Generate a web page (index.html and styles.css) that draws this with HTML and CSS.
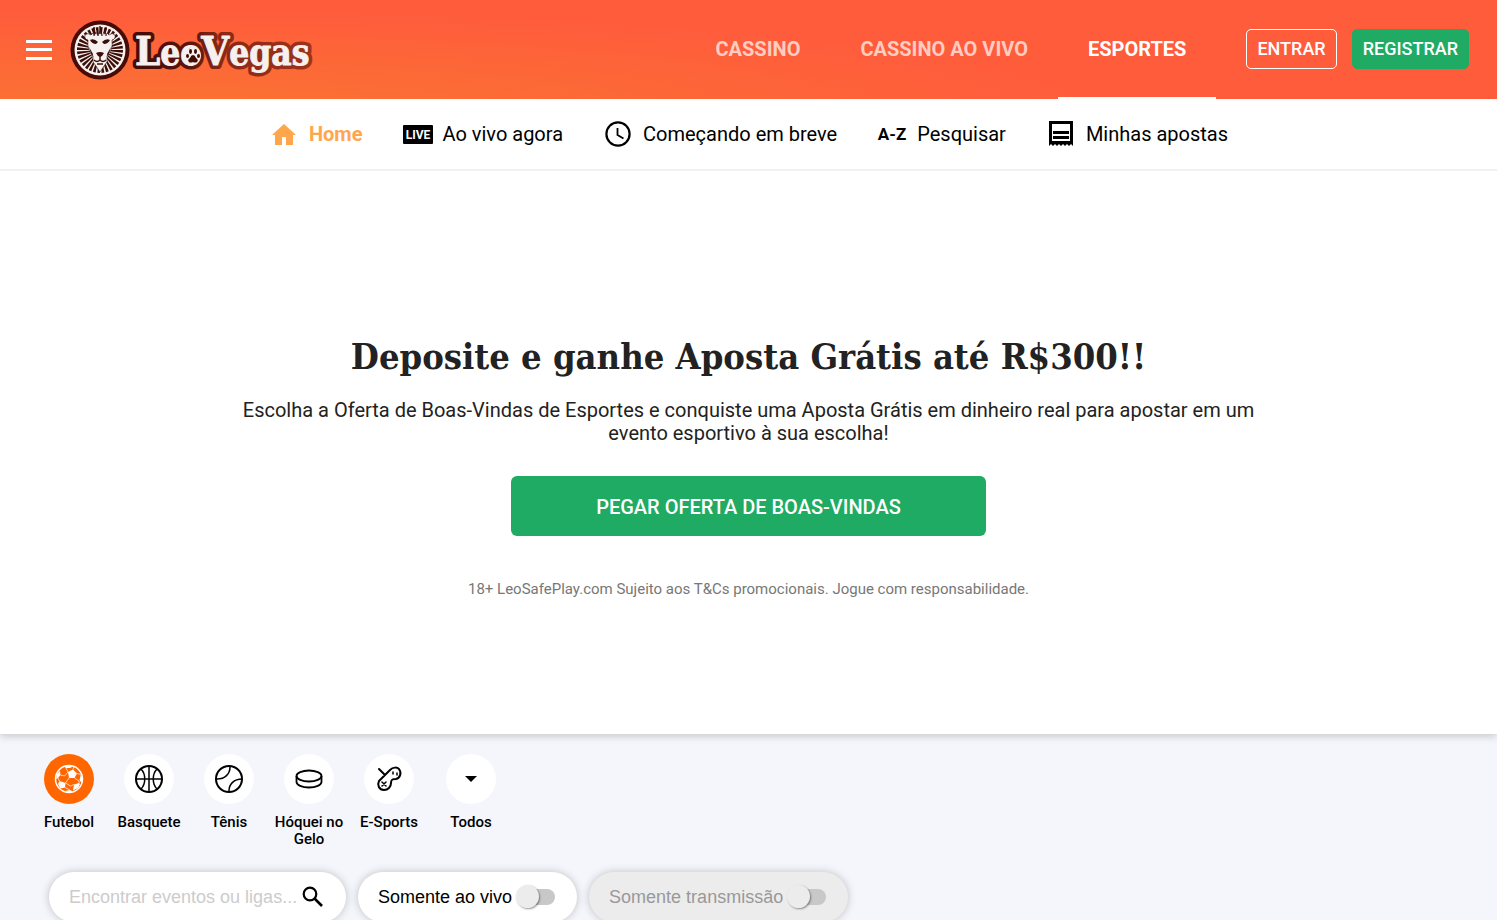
FILE: index.html
```html
<!DOCTYPE html>
<html lang="pt-BR">
<head>
<meta charset="utf-8">
<meta name="viewport" content="width=device-width, initial-scale=1">
<title>LeoVegas Esportes</title>
<link rel="stylesheet" href="styles.css">
</head>
<body>
<div class="app">
  <header class="topbar">
    <button class="menu" type="button" aria-label="Menu"><span class="menu-line"></span><span class="menu-line"></span><span class="menu-line"></span></button>
    <a class="logo" href="#" aria-label="LeoVegas">
      <svg width="246" height="62" viewBox="0 0 246 62">
        <defs>
          <linearGradient id="edge" x1="0" x2="1" y1="0" y2="0">
            <stop offset="0" stop-color="#420c07"/><stop offset=".3" stop-color="#5b140b"/><stop offset=".5" stop-color="#8a2816"/><stop offset="1" stop-color="#9e321b"/>
          </linearGradient>
        </defs>
        <circle cx="30" cy="31" r="29.5" fill="#480b06"/>
        <circle cx="30" cy="31" r="25.5" fill="#f6f1ee"/>
        <circle cx="30" cy="31" r="16.5" fill="none" stroke="#3b0e09" stroke-width="13" pathLength="128" stroke-dasharray="2.5 1.5"/>
        <path d="M18 21q-4-1-3-5q3-3 6 0l2-2 1 3 2-4 2 4 2-5 2 5 2-4 2 4 1-3 2 2q3-3 6 0q1 4-3 5q1 5-1 10l-4 6 0 6-3 4-4 6-4-6-3-4 0-6-4-6q-2-5-1-10z" fill="#f6f1ee" stroke="#3b0e09" stroke-width=".6"/>
        <path d="M20 21q4-2 8 2l-2 2q-4 0-6-4zM40 21q-4-2-8 2l2 2q4 0 6-4zM26 34q4-2 8 0l-2 3-2 1-2-1zM19 28l4 7-1 3zM41 28l-4 7 1 3z" fill="#3b0e09"/>
        <path d="M30 37v4q-3 3-6 0M30 41q3 3 6 0M27 45h6M24 8l1 7M30 7v8M36 8l-1 7" fill="none" stroke="#3b0e09" stroke-width="1.4"/>
        <g class="logo-word" stroke-linejoin="round">
          <text x="65" y="46" fill="url(#edge)" stroke="url(#edge)" stroke-width="8"><tspan class="logo-cap">L</tspan>eo<tspan class="logo-cap">V</tspan>egas</text>
          <text x="65" y="46" fill="#f6f1ee" stroke="#f6f1ee" stroke-width=".8" aria-hidden="true"><tspan class="logo-cap">L</tspan>eo<tspan class="logo-cap">V</tspan>egas</text>
        </g>
        <circle cx="123" cy="36.500" r="8" fill="#f6f1ee"/>
        <g fill="#420c07"><path d="M123 36q2 0 3 3 3 2 1 4-2 1-4 0-2 1-4 0-2-2 1-4 1-3 3-3z"/><ellipse cx="117.500" cy="37" rx="1.500" ry="2"/><ellipse cx="120.500" cy="32.500" rx="1.500" ry="2.400"/><ellipse cx="125.500" cy="32.500" rx="1.500" ry="2.400"/><ellipse cx="128.500" cy="37" rx="1.500" ry="2"/></g>
      </svg>
    </a>
    <nav class="main-nav" aria-label="Principal">
      <a class="main-link" href="#">CASSINO</a>
      <a class="main-link" href="#">CASSINO AO VIVO</a>
      <a class="main-link main-link-active" href="#">ESPORTES</a>
    </nav>
    <div class="account">
      <button class="btn btn-outline" type="button">ENTRAR</button>
      <button class="btn btn-green" type="button">REGISTRAR</button>
    </div>
  </header>

  <nav class="sub-nav" aria-label="Esportes">
    <a class="sub-link sub-link-active" href="#">
      <svg class="sub-icon" width="30" height="30" viewBox="0 0 30 30"><path d="M3 16 15 5l12 11h-3v10h-7v-8h-4v8H6V16z" fill="#ffa64d"/></svg>Home</a>
    <a class="sub-link" href="#">
      <svg class="sub-icon" width="30" height="30" viewBox="0 0 30 30"><rect y="6" width="30" height="19" rx="1"/><text class="live-text" x="15" y="20" text-anchor="middle" fill="#fff">LIVE</text></svg>Ao vivo agora</a>
    <a class="sub-link" href="#">
      <svg class="sub-icon" width="30" height="30" viewBox="0 0 30 30"><circle cx="15" cy="15" r="11.600" fill="none" stroke="#000" stroke-width="2.200"/><path d="M14.500 9v7l6 3.500" fill="none" stroke="#000" stroke-width="1.800"/></svg>Começando em breve</a>
    <a class="sub-link" href="#">
      <svg class="sub-icon" width="30" height="30" viewBox="0 0 30 30"><text class="az-text" x="15" y="21" text-anchor="middle">A-Z</text></svg>Pesquisar</a>
    <a class="sub-link" href="#">
      <svg class="sub-icon" width="30" height="30" viewBox="0 0 30 30"><path fill-rule="evenodd" d="M3 2h24v25l-2-2-2 2-2-2-2 2-2-2-2 2-2-2-2 2-2-2-2 2-2-2-2 2zM6 5v17h18V5z"/><path d="M7 12h16v3H7zM7 17h16v3H7z"/></svg>Minhas apostas</a>
  </nav>

  <main class="hero">
    <h1 class="hero-title">Deposite e ganhe Aposta Grátis até R$300!!</h1>
    <p class="hero-text">Escolha a Oferta de Boas-Vindas de Esportes e conquiste uma Aposta Grátis em dinheiro real para apostar em um evento esportivo à sua escolha!</p>
    <button class="hero-button" type="button">PEGAR OFERTA DE BOAS-VINDAS</button>
    <p class="hero-terms">18+ LeoSafePlay.com Sujeito aos T&amp;Cs promocionais. Jogue com responsabilidade.</p>
  </main>

  <section class="sports">
    <nav class="sport-list" aria-label="Modalidades">
      <a class="sport" href="#"><span class="sport-disc sport-disc-active">
        <svg width="30" height="30" viewBox="0 0 30 30" fill="#fff"><circle cx="15" cy="15" r="13.500" fill="none" stroke="#fff" stroke-width="1.500"/><path d="M14 8l5-2.500 4 4-2.500 4.500H15zM5.500 17l6 2-.5 4.500-4.500 1L4 20zM20 20.500l5-1.500 1 1-2 4-5 2.500zM3 10l3-3 .5 4L4 14 2 15zM10 2.500l4-1 5 1-3 1.500-4 0zM27 10l1.500 5-1 4-2-3zM11 27l5-1 3 1.500-4 1z"/><path d="M14 8l-2-4M19 5.500l1-3M23 9.500l4 1M20.500 14l4.500 3v2M15 14l-3.500 5M6.500 11l4 1 3.500-4M4 14l1.500 3M11 23.500l5 2.500M11.500 19l5 3 3.500-1.500" fill="none" stroke="#fff" stroke-width=".7"/></svg></span>Futebol</a>
      <a class="sport" href="#"><span class="sport-disc">
        <svg width="30" height="30" viewBox="0 0 30 30" fill="none" stroke="#000"><circle cx="15" cy="15" r="13" stroke-width="2"/><path d="M15 2v26M2 15h26M7 5c5 5 5 15 0 20M23 5c-5 5-5 15 0 20" stroke-width="1.500"/></svg></span>Basquete</a>
      <a class="sport" href="#"><span class="sport-disc">
        <svg width="30" height="30" viewBox="0 0 30 30" fill="none" stroke="#000"><circle cx="15" cy="15" r="13" stroke-width="2"/><path d="M3 15c8 0 13-5 13-12M28 15c-8 0-13 5-13 12" stroke-width="1.500"/></svg></span>Tênis</a>
      <a class="sport" href="#"><span class="sport-disc">
        <svg width="30" height="30" viewBox="0 0 30 30" fill="none" stroke="#000" stroke-width="1.800"><ellipse cx="15" cy="12" rx="12.500" ry="5.500"/><path d="M2.500 12v6c0 3 5.500 5.500 12.500 5.500s12.500-2.500 12.500-5.500v-6"/></svg></span>Hóquei no Gelo</a>
      <a class="sport" href="#"><span class="sport-disc">
        <svg width="30" height="30" viewBox="0 0 30 30" fill="none" stroke="#000" stroke-width="2" stroke-linecap="round"><path d="M5 17 16 6c3-3 7-3 9-1 3 4 1 9-3 10-3 0-5 0-5 4 0 4-3 7-7 7-5 0-7-5-5-9zM11 11 5 5"/><path d="m8 18 4 4M12 18l-4 4M19 8v2M23 9v2" stroke-width="1.500"/></svg></span>E-Sports</a>
      <a class="sport sport-all" href="#"><span class="sport-disc">
        <svg width="30" height="30" viewBox="0 0 30 30"><path d="M9 12h12l-6 6z"/></svg></span>Todos</a>
    </nav>
    <form class="filters">
      <label class="pill pill-search"><input class="search-input" type="text" placeholder="Encontrar eventos ou ligas..." aria-label="Encontrar eventos ou ligas">
        <svg width="22" height="22" viewBox="0 0 22 22" fill="none" stroke="#000"><circle cx="8" cy="8" r="6.300" stroke-width="2.200"/><path d="m12.500 12.500 7.500 7.500" stroke-width="2.600"/></svg></label>
      <label class="pill">Somente ao vivo<input class="switch" type="checkbox"></label>
      <label class="pill pill-disabled">Somente transmissão<input class="switch" type="checkbox" disabled></label>
    </form>
  </section>
</div>
</body>
</html>
```
FILE: styles.css
```css
* {
  box-sizing: border-box;
}

body {
  margin: 0;
  font-family: Roboto, "Liberation Sans", sans-serif;
  color: #000;
  background: #f5f6fb;
}

a {
  color: inherit;
  text-decoration: none;
}

button {
  font-family: inherit;
  cursor: pointer;
}

.app {
  height: 100vh;
  overflow: auto;
  scrollbar-width: none;
}

/* Top bar */
.topbar {
  display: flex;
  align-items: center;
  height: 99px;
  padding: 0 28px 0 26px;
  background: radial-gradient(ellipse 65% 110% at 10% 120%, #fa7531, #ff5c3c);
}

.menu {
  display: flex;
  flex-direction: column;
  justify-content: space-between;
  width: 26px;
  height: 20px;
  padding: 0;
  border: 0;
  background: none;
}

.menu-line {
  height: 3px;
  background: #fff;
}

.logo {
  display: flex;
  margin-left: 18px;
}

.logo-word {
  font-family: "Roboto Slab", "DejaVu Serif Condensed", "DejaVu Serif", serif;
  font-size: 35px;
  font-weight: 700;
}

.logo-cap {
  font-size: 40px;
}

.main-nav {
  display: flex;
  align-self: stretch;
  margin-left: auto;
}

.main-link {
  display: flex;
  align-items: center;
  padding: 0 30px;
  border-bottom: 2px solid transparent;
  color: rgba(255, 255, 255, 0.7);
  font-size: 20px;
  font-weight: 700;
}

.main-link-active {
  border-bottom-color: #fff;
  color: #fff;
}

.account {
  display: flex;
  gap: 15px;
  padding-bottom: 2px;
  margin-left: 30px;
}

.btn {
  height: 40px;
  padding: 0 10px;
  border: 1px solid #fff;
  border-radius: 5px;
  background: none;
  color: #fff;
  font-size: 18px;
  font-weight: 500;
}

.btn-green {
  border-color: #1fab63;
  background: #1fab63;
}

/* Sports sub navigation */
.sub-nav {
  position: relative;
  z-index: 1;
  display: flex;
  justify-content: center;
  gap: 40px;
  height: 72px;
  padding-bottom: 1px;
  border-bottom: 2px solid #f1f1f1;
  background: #fff;
}

.sub-link {
  display: flex;
  align-items: center;
  gap: 10px;
  font-size: 20px;
}

.sub-link-active {
  color: #ffa64d;
  font-weight: 700;
}

.live-text {
  font-size: 12px;
  font-weight: 700;
}

.az-text {
  font-size: 17px;
  font-weight: 700;
}

/* Welcome offer */
.hero {
  position: relative;
  display: flex;
  flex-direction: column;
  align-items: center;
  padding: 158px 32px 134px;
  background: #fff;
  box-shadow: 0 2px 8px rgba(0, 0, 0, 0.2);
  color: #222;
  text-align: center;
}

.hero-title {
  margin: 0;
  font-family: "Roboto Slab", "DejaVu Serif Condensed", "DejaVu Serif", serif;
  font-size: 36px;
  font-stretch: condensed;
  font-weight: 700;
  line-height: 54px;
}

.hero-text {
  max-width: 1050px;
  margin: 16px 0 0;
  font-size: 20px;
  line-height: 23px;
}

.hero-button {
  width: 475px;
  max-width: 100%;
  height: 60px;
  margin-top: 31px;
  padding: 2px 0 0;
  border: 0;
  border-radius: 6px;
  background: #1fab63;
  color: #fff;
  font-size: 20px;
  font-weight: 500;
}

.hero-terms {
  margin: 42px 0 0;
  color: #777;
  font-size: 15px;
  line-height: 22px;
}

/* Sport picker */
.sports {
  padding: 20px 29px;
}

.sport-list {
  display: flex;
}

.sport {
  display: flex;
  flex-direction: column;
  align-items: center;
  gap: 10px;
  width: 80px;
  font-size: 15px;
  font-weight: 500;
  line-height: 17px;
  text-align: center;
}

.sport-all {
  width: 84px;
}

.sport-disc {
  display: flex;
  align-items: center;
  justify-content: center;
  width: 50px;
  height: 50px;
  border-radius: 50%;
  background: #fff;
}

.sport-disc-active {
  background: #ff6600;
}

/* Filters */
.filters {
  display: flex;
  gap: 12px;
  margin: 24px 20px 0;
}

.pill {
  display: flex;
  align-items: center;
  gap: 4px;
  height: 50px;
  padding: 0 22px 0 20px;
  border-radius: 25px;
  background: #fff;
  box-shadow: 0 0 8px rgba(0, 0, 0, 0.22);
  font-family: "Liberation Sans", Arial, sans-serif;
  font-size: 18px;
}

.pill-search {
  width: 297px;
}

.pill-disabled {
  background: #ececec;
  color: #999;
}

.search-input {
  flex: 1;
  min-width: 0;
  padding: 0;
  border: 0;
  outline: 0;
  background: none;
  font: inherit;
}

.search-input::placeholder {
  color: #ccc;
}

.switch {
  position: relative;
  appearance: none;
  width: 39px;
  height: 24px;
  margin: 0;
}

.switch::before {
  content: "";
  position: absolute;
  inset: 4px 0 4px 8px;
  border-radius: 8px;
  background: #c8c8c8;
}

.switch::after {
  content: "";
  position: absolute;
  top: 0;
  left: 0;
  width: 23px;
  height: 23px;
  border-radius: 50%;
  background: #ececec;
  box-shadow: 1px 1px 2px rgba(0, 0, 0, 0.4);
}

.switch:checked::after {
  left: 16px;
}
```
